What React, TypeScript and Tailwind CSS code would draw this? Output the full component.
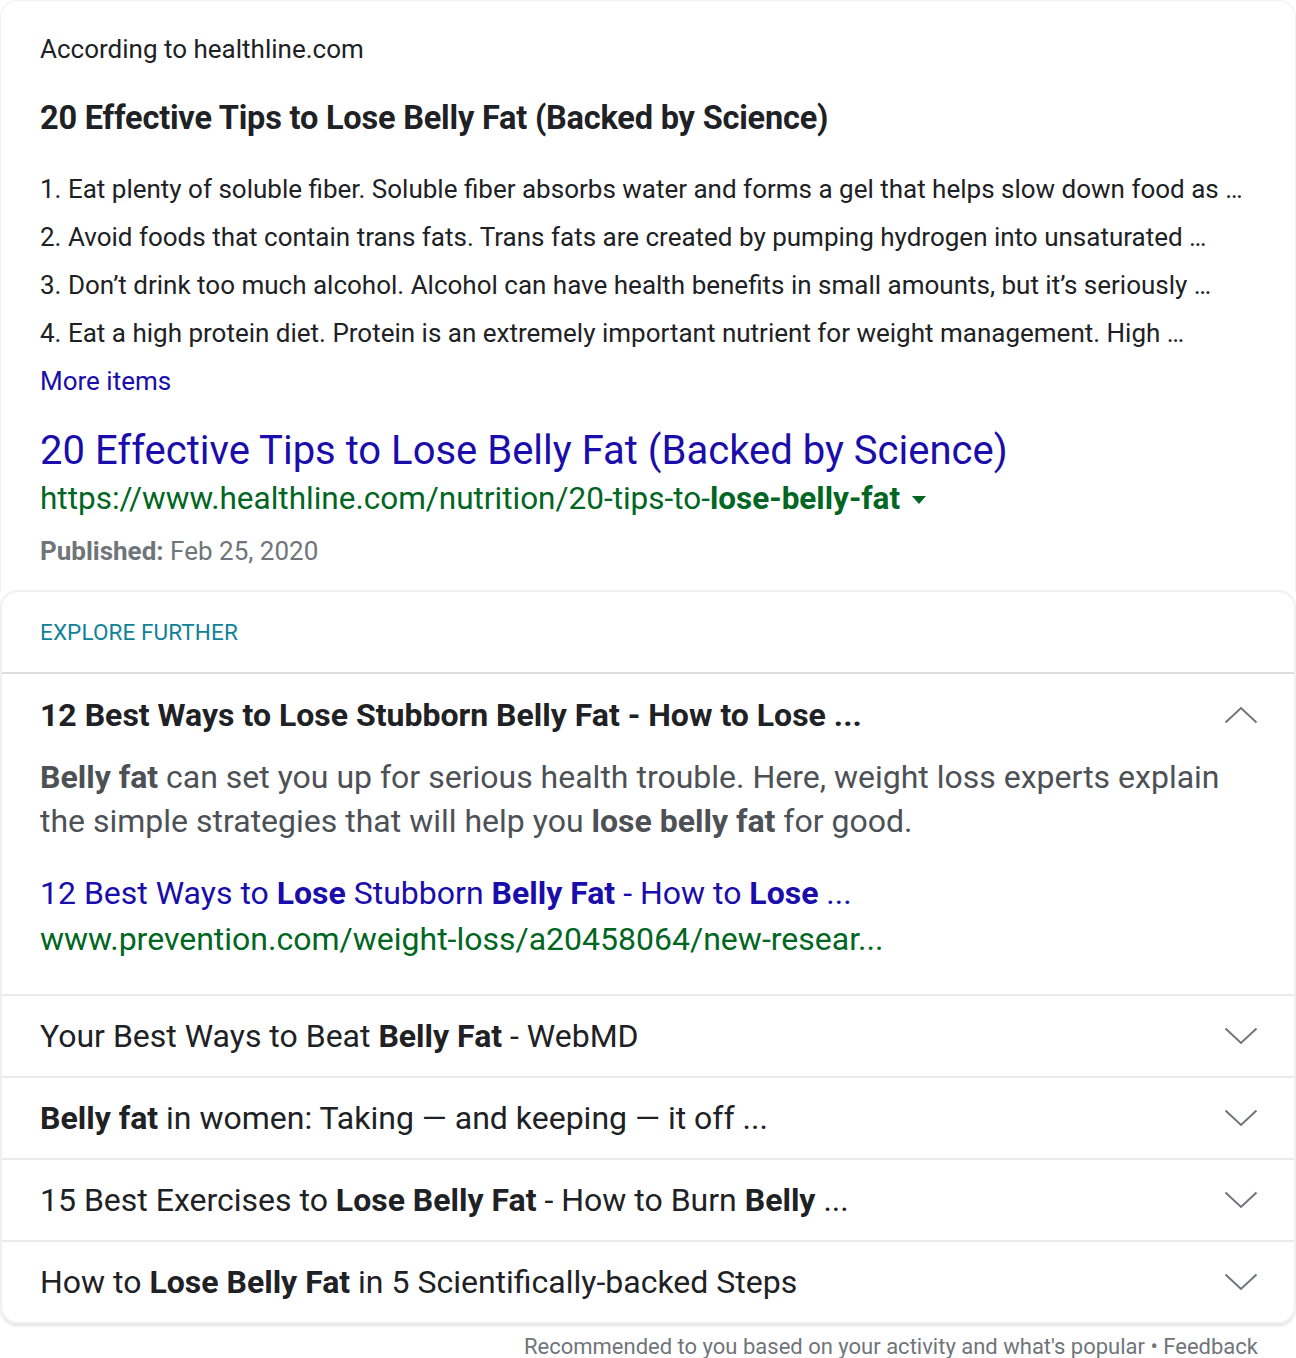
import React from "react";

const Chevron = ({ up = false }: { up?: boolean }) => (
  <svg width="34" height="20" viewBox="0 0 34 20" fill="none" className="shrink-0">
    {up ? (
      <path d="M1.5 17.5 L17 3 L32.5 17.5" stroke="#70757a" strokeWidth="2" />
    ) : (
      <path d="M1.5 2.5 L17 17 L32.5 2.5" stroke="#70757a" strokeWidth="2" />
    )}
  </svg>
);

const Row = ({ children }: { children: React.ReactNode }) => (
  <div className="flex h-[82px] items-center justify-between border-t-2 border-[#ebebeb] pl-[38px] pr-[36px]">
    <div className="text-[32px] leading-[40px] text-[#202124] whitespace-nowrap">{children}</div>
    <Chevron />
  </div>
);

export default function App() {
  return (
    <div
      className="min-h-[1358px] w-[1296px] bg-white overflow-hidden"
      style={{ fontFamily: "Roboto, 'Noto Sans', Arial, sans-serif" }}
    >
      <div className="rounded-t-[18px] border-t border-l border-r border-[#f1f1f1]">
        <div className="px-[39px] pt-[30px] pb-[17px]">
          <div className="text-[26px] leading-[36px] text-[#202124]">According to healthline.com</div>
          <div className="mt-[31px] text-[32.5px] leading-[40px] font-bold text-[#202124] tracking-[-0.2px]">
            20 Effective Tips to Lose Belly Fat (Backed by Science)
          </div>
          <ol className="mt-[27px] text-[26px] leading-[48px] text-[#202124]">
            <li>1. Eat plenty of soluble fiber. Soluble fiber absorbs water and forms a gel that helps slow down food as …</li>
            <li>2. Avoid foods that contain trans fats. Trans fats are created by pumping hydrogen into unsaturated …</li>
            <li>3. Don’t drink too much alcohol. Alcohol can have health benefits in small amounts, but it’s seriously …</li>
            <li>4. Eat a high protein diet. Protein is an extremely important nutrient for weight management. High …</li>
          </ol>
          <div className="text-[26px] leading-[48px] text-[#1a0dab]">More items</div>
          <div className="mt-[22px] text-[40px] leading-[48px] text-[#1a0dab] whitespace-nowrap">
            20 Effective Tips to Lose Belly Fat (Backed by Science)
          </div>
          <div className="flex items-center text-[31.5px] leading-[48px] text-[#006621] whitespace-nowrap">
            <span>
              https://www.healthline.com/nutrition/20-tips-to-<b className="font-bold">lose-belly-fat</b>
            </span>
            <svg width="14" height="8" viewBox="0 0 14 8" className="ml-[12px] mt-[2px]">
              <path d="M0 0 L14 0 L7 8 Z" fill="#006621" />
            </svg>
          </div>
          <div className="mt-[4px] text-[26px] leading-[48px] text-[#70757a]">
            <b className="font-bold">Published:</b> Feb 25, 2020
          </div>
        </div>
      </div>

      <div className="rounded-[18px] border-2 border-[#f0f0f0] shadow-[0_2px_3px_rgba(0,0,0,0.12)] -mt-[2px]">
        <div className="h-[82px] flex items-center px-[38px] border-b-2 border-[#dcdcdc]">
          <div className="text-[22.5px] leading-[30px] text-[#0f8299] tracking-[0.1px]">EXPLORE FURTHER</div>
        </div>
        <div className="pl-[38px] pr-[36px] pt-[21px] pb-[32px]">
          <div className="flex items-center justify-between">
            <div className="text-[32px] leading-[40px] font-bold text-[#202124] whitespace-nowrap">
              12 Best Ways to Lose Stubborn Belly Fat - How to Lose ...
            </div>
            <Chevron up />
          </div>
          <div className="mt-[20px] text-[32px] leading-[44px] text-[#4d5156] whitespace-nowrap">
            <div>
              <b className="font-bold">Belly fat</b> can set you up for serious health trouble. Here, weight loss experts explain
            </div>
            <div>
              the simple strategies that will help you <b className="font-bold">lose belly fat</b> for good.
            </div>
          </div>
          <div className="mt-[27px] text-[32px] leading-[46px] text-[#1a0dab] whitespace-nowrap">
            12 Best Ways to <b className="font-bold">Lose</b> Stubborn <b className="font-bold">Belly Fat</b> - How to{" "}
            <b className="font-bold">Lose</b> ...
          </div>
          <div className="text-[32px] leading-[46px] text-[#006621] whitespace-nowrap">
            www.prevention.com/weight-loss/a20458064/new-resear...
          </div>
        </div>
        <Row>
          Your Best Ways to Beat <b className="font-bold">Belly Fat</b> - WebMD
        </Row>
        <Row>
          <b className="font-bold">Belly fat</b> in women: Taking — and keeping — it off ...
        </Row>
        <Row>
          15 Best Exercises to <b className="font-bold">Lose Belly Fat</b> - How to Burn <b className="font-bold">Belly</b> ...
        </Row>
        <Row>
          How to <b className="font-bold">Lose Belly Fat</b> in 5 Scientifically-backed Steps
        </Row>
      </div>
      <div className="flex justify-end pr-[38px] pt-[8px] text-[22px] leading-[30px] text-[#70757a]">
        Recommended to you based on your activity and what's popular • Feedback
      </div>
    </div>
  );
}
